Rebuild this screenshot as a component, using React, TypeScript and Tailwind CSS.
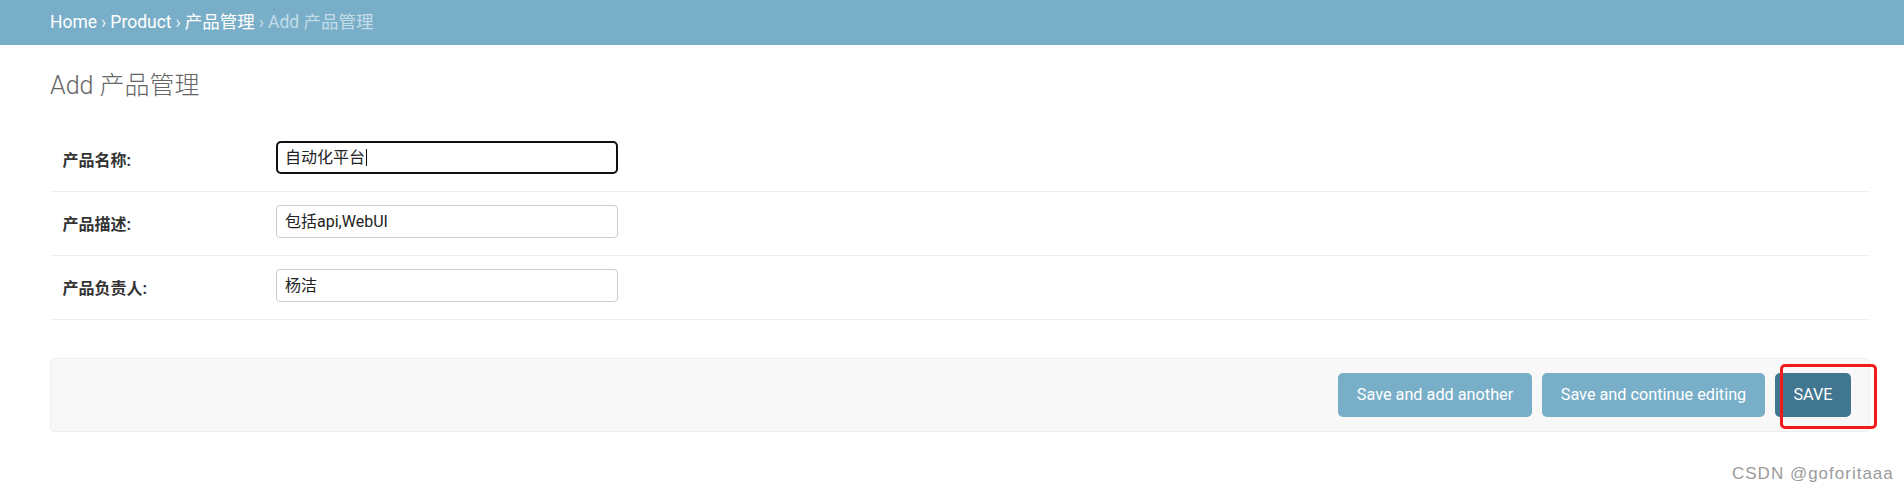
export default function App() {
  const rows = [
    { label: "产品名称:", value: "自动化平台", focused: true },
    { label: "产品描述:", value: "包括api,WebUI", focused: false },
    { label: "产品负责人:", value: "杨洁", focused: false },
  ];
  return (
    <div className="relative h-[492px] w-full overflow-hidden bg-white font-[Roboto,'Noto_Sans_CJK_SC',sans-serif]">
      <div className="flex h-[45px] items-center bg-[#79aec8] px-[50px] text-[17.5px] text-white">
        <span>Home</span>
        <span className="px-[4px] text-[#e4eef4]">›</span>
        <span>Product</span>
        <span className="px-[4px] text-[#e4eef4]">›</span>
        <span>产品管理</span>
        <span className="px-[4px] text-[#c4dce8]">›</span>
        <span className="text-[#c4dce8]">Add 产品管理</span>
      </div>
      <div className="pl-[50px] pr-[34px] pt-[26px]">
        <h1 className="text-[25px] font-light leading-[30px] text-[#666]">Add 产品管理</h1>
        <div className="mt-[27px]">
          {rows.map((r) => (
            <div key={r.label} className="flex h-[64px] border-b border-[#eee] pl-[12.5px] pt-[13px]">
              <div className="mt-[10px] w-[213px] text-[16px] font-bold leading-[20px] text-[#333]">{r.label}</div>
              {r.focused ? (
                <div className="flex h-[33px] w-[342px] items-center rounded-[5px] border-2 border-[#101010] pl-[7.5px] text-[16px] text-[#222]">
                  <span>{r.value}</span>
                  <span className="ml-[1px] inline-block h-[17px] w-[1px] bg-[#111]" />
                </div>
              ) : (
                <div className="flex h-[33px] w-[342px] items-center rounded-[4px] border border-[#ccc] pl-[8.5px] text-[16px] text-[#222]">
                  <span>{r.value}</span>
                </div>
              )}
            </div>
          ))}
        </div>
        <div className="mt-[38px] flex h-[74px] items-center justify-end gap-[10px] rounded-[5px] border border-[#eee] bg-[#f8f8f8] pr-[18px]">
          <div className="flex h-[44px] w-[194px] items-center justify-center rounded-[5px] bg-[#79aec8] text-[16.25px] text-white">
            Save and add another
          </div>
          <div className="flex h-[44px] w-[223px] items-center justify-center rounded-[5px] bg-[#79aec8] text-[16.25px] text-white">
            Save and continue editing
          </div>
          <div className="flex h-[44px] w-[76px] items-center justify-center rounded-[5px] bg-[#417690] text-[16.25px] text-white">
            SAVE
          </div>
        </div>
      </div>
      <div className="pointer-events-none absolute left-[1780px] top-[364px] h-[65px] w-[97px] rounded-[5px] border-[3px] border-[#f21b1b]" />
      <div className="absolute left-[1732px] top-[464px] font-['Liberation_Sans',sans-serif] text-[17px] leading-[20px] tracking-[1px] text-[#9a9a9a] [text-shadow:0_0_1px_#ffffff]">
        CSDN @goforitaaa
      </div>
    </div>
  );
}
